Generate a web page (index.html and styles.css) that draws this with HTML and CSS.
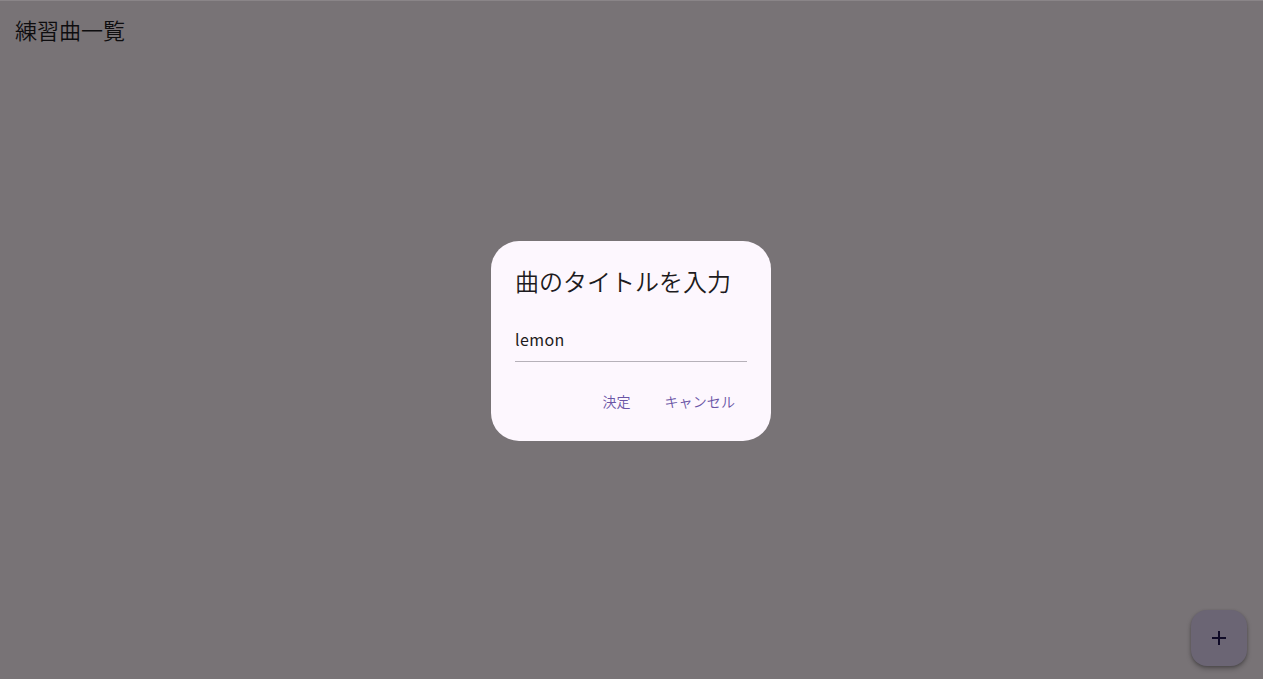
FILE: index.html
```html
<!DOCTYPE html>
<html lang="ja">
<head>
<meta charset="utf-8">
<link rel="stylesheet" href="styles.css">
</head>
<body>
<div class="app">
  <header class="appbar"><h1 class="appbar-title">練習曲一覧</h1></header>
  <main class="content"></main>
  <button class="fab" aria-label="追加">
    <svg width="24" height="24" viewBox="0 0 24 24"><path d="M19 13h-6v6h-2v-6H5v-2h6V5h2v6h6v2z" fill="currentColor"/></svg>
  </button>
</div>
<div class="scrim">
  <div class="dialog" role="dialog">
    <h2 class="dialog-title">曲のタイトルを入力</h2>
    <div class="field"><span class="field-value">lemon</span></div>
    <div class="actions">
      <button class="text-btn">決定</button>
      <button class="text-btn">キャンセル</button>
    </div>
  </div>
</div>
</body>
</html>
```
FILE: styles.css
```css
* { box-sizing: border-box; }
html, body { margin: 0; height: 100%; }
body {
  font-family: "Noto Sans CJK JP", "Noto Sans", sans-serif;
  font-weight: 350;
  background: #787376;
  overflow: hidden;
}
.app {
  height: 100%;
  display: flex;
  flex-direction: column;
  position: relative;
  border-top: 1px solid #8a8588;
}
.appbar {
  height: 60px;
  display: flex;
  align-items: center;
  padding: 0 15px;
}
.appbar-title {
  margin: 0;
  font-size: 22px;
  font-weight: 350;
  color: #0e0d0f;
  line-height: 28px;
  position: relative;
  top: -2px;
}
.content { flex: 1; }
.fab {
  position: absolute;
  right: 16px;
  bottom: 13px;
  width: 56px;
  height: 56px;
  border: none;
  border-radius: 16px;
  background: #6b6574;
  color: #0f0a26;
  display: flex;
  align-items: center;
  justify-content: center;
  box-shadow: 0 3px 5px rgba(0,0,0,0.25), 0 1px 3px rgba(0,0,0,0.2);
  padding: 0;
}
.scrim {
  position: fixed;
  inset: 0;
  display: flex;
  align-items: center;
  justify-content: center;
  padding-right: 1px;
}
.dialog {
  width: 280px;
  height: 200px;
  background: #fdf7fe;
  border-radius: 28px;
  padding: 24px 24px 0 24px;
  display: flex;
  flex-direction: column;
  position: relative;
  top: 1px;
}
.dialog-title {
  margin: 0;
  font-size: 24px;
  font-weight: 350;
  line-height: 32px;
  color: #1d1b20;
  height: 36px;
}
.field {
  margin-top: 12px;
  height: 49px;
  border-bottom: 1px solid #b6b1b9;
  display: flex;
  align-items: center;
  padding-top: 5px;
}
.field-value {
  font-size: 16px;
  font-weight: 400;
  color: #1d1b20;
  letter-spacing: 0.4px;
}
.actions {
  margin-top: 19px;
  display: flex;
  justify-content: flex-end;
  gap: 4px;
}
.text-btn {
  font-family: inherit;
  font-weight: 350;
  min-width: 64px;
  height: 40px;
  padding: 0 12px;
  border: none;
  background: transparent;
  color: #6a55a6;
  font-size: 14px;
  letter-spacing: 0.1px;
  border-radius: 20px;
}
```
